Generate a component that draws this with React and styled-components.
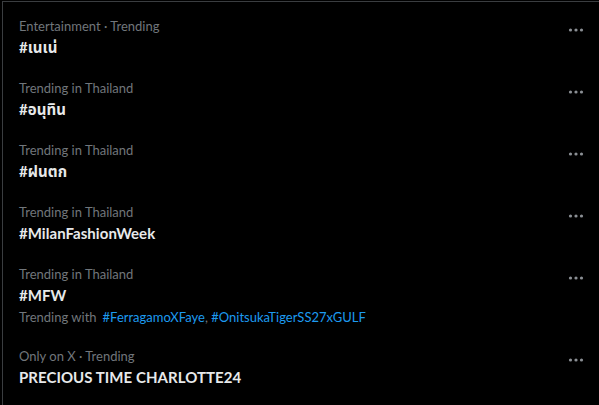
import styled, { createGlobalStyle } from 'styled-components';

const trends = [
  { meta: 'Entertainment · Trending', title: '#เนเน่' },
  { meta: 'Trending in Thailand', title: '#อนุทิน' },
  { meta: 'Trending in Thailand', title: '#ฝนตก' },
  { meta: 'Trending in Thailand', title: '#MilanFashionWeek' },
  {
    meta: 'Trending in Thailand',
    title: '#MFW',
    with: ['#FerragamoXFaye', '#OnitsukaTigerSS27xGULF'],
  },
  { meta: 'Only on X · Trending', title: 'PRECIOUS TIME CHARLOTTE24' },
];

function MoreIcon() {
  return (
    <svg width="18" height="18" viewBox="0 0 18 18">
      <circle cx="3.5" cy="9" r="1.6" fill="#8b8f94" />
      <circle cx="9" cy="9" r="1.6" fill="#8b8f94" />
      <circle cx="14.5" cy="9" r="1.6" fill="#8b8f94" />
    </svg>
  );
}

export default function App() {
  return (
    <>
      <GlobalStyle />
      <Panel>
        {trends.map((t, i) => (
          <Trend key={i} $extra={!!t.with}>
            <Body>
              <Meta>{t.meta}</Meta>
              <Title>{t.title}</Title>
              {t.with && (
                <With>
                  Trending with
                  <Tags>
                    {t.with.map((tag, j) => (
                      <span key={tag}>
                        <Tag>{tag}</Tag>
                        {j < t.with.length - 1 ? ', ' : ''}
                      </span>
                    ))}
                  </Tags>
                </With>
              )}
            </Body>
            <More>
              <MoreIcon />
            </More>
          </Trend>
        ))}
      </Panel>
    </>
  );
}

const GlobalStyle = createGlobalStyle`
  html, body {
    margin: 0;
    background: #000;
  }
  body {
    font-family: "Lato", "Noto Sans", "Noto Sans Thai", "DejaVu Sans", sans-serif;
  }
`;

const Panel = styled.div`
  width: 597px;
  height: 404px;
  box-sizing: border-box;
  margin: 1px 0 0 2px;
  border-top: 1px solid #3a3d40;
  border-left: 1px solid #3a3d40;
  background: #000;
  overflow: hidden;
`;

const Trend = styled.div`
  display: flex;
  align-items: flex-start;
  justify-content: space-between;
  padding: 16px 14px ${(p) => (p.$extra ? '5px' : '7px')} 16px;
`;

const Body = styled.div`
  display: flex;
  flex-direction: column;
`;

const Meta = styled.div`
  font-size: 13px;
  line-height: 16px;
  color: #71767b;
`;

const Title = styled.div`
  font-size: 15px;
  line-height: 20px;
  font-weight: 700;
  letter-spacing: 0.05px;
  color: #e7e9ea;
  margin-top: 3px;
`;

const With = styled.div`
  display: flex;
  gap: 6px;
  font-size: 13px;
  line-height: 20px;
  color: #71767b;
  margin-top: 2px;
`;

const Tags = styled.span`
  color: #71767b;
`;

const Tag = styled.span`
  color: #1d9bf0;
`;

const More = styled.div`
  display: flex;
  align-items: center;
  justify-content: center;
  margin-top: 3px;
`;
